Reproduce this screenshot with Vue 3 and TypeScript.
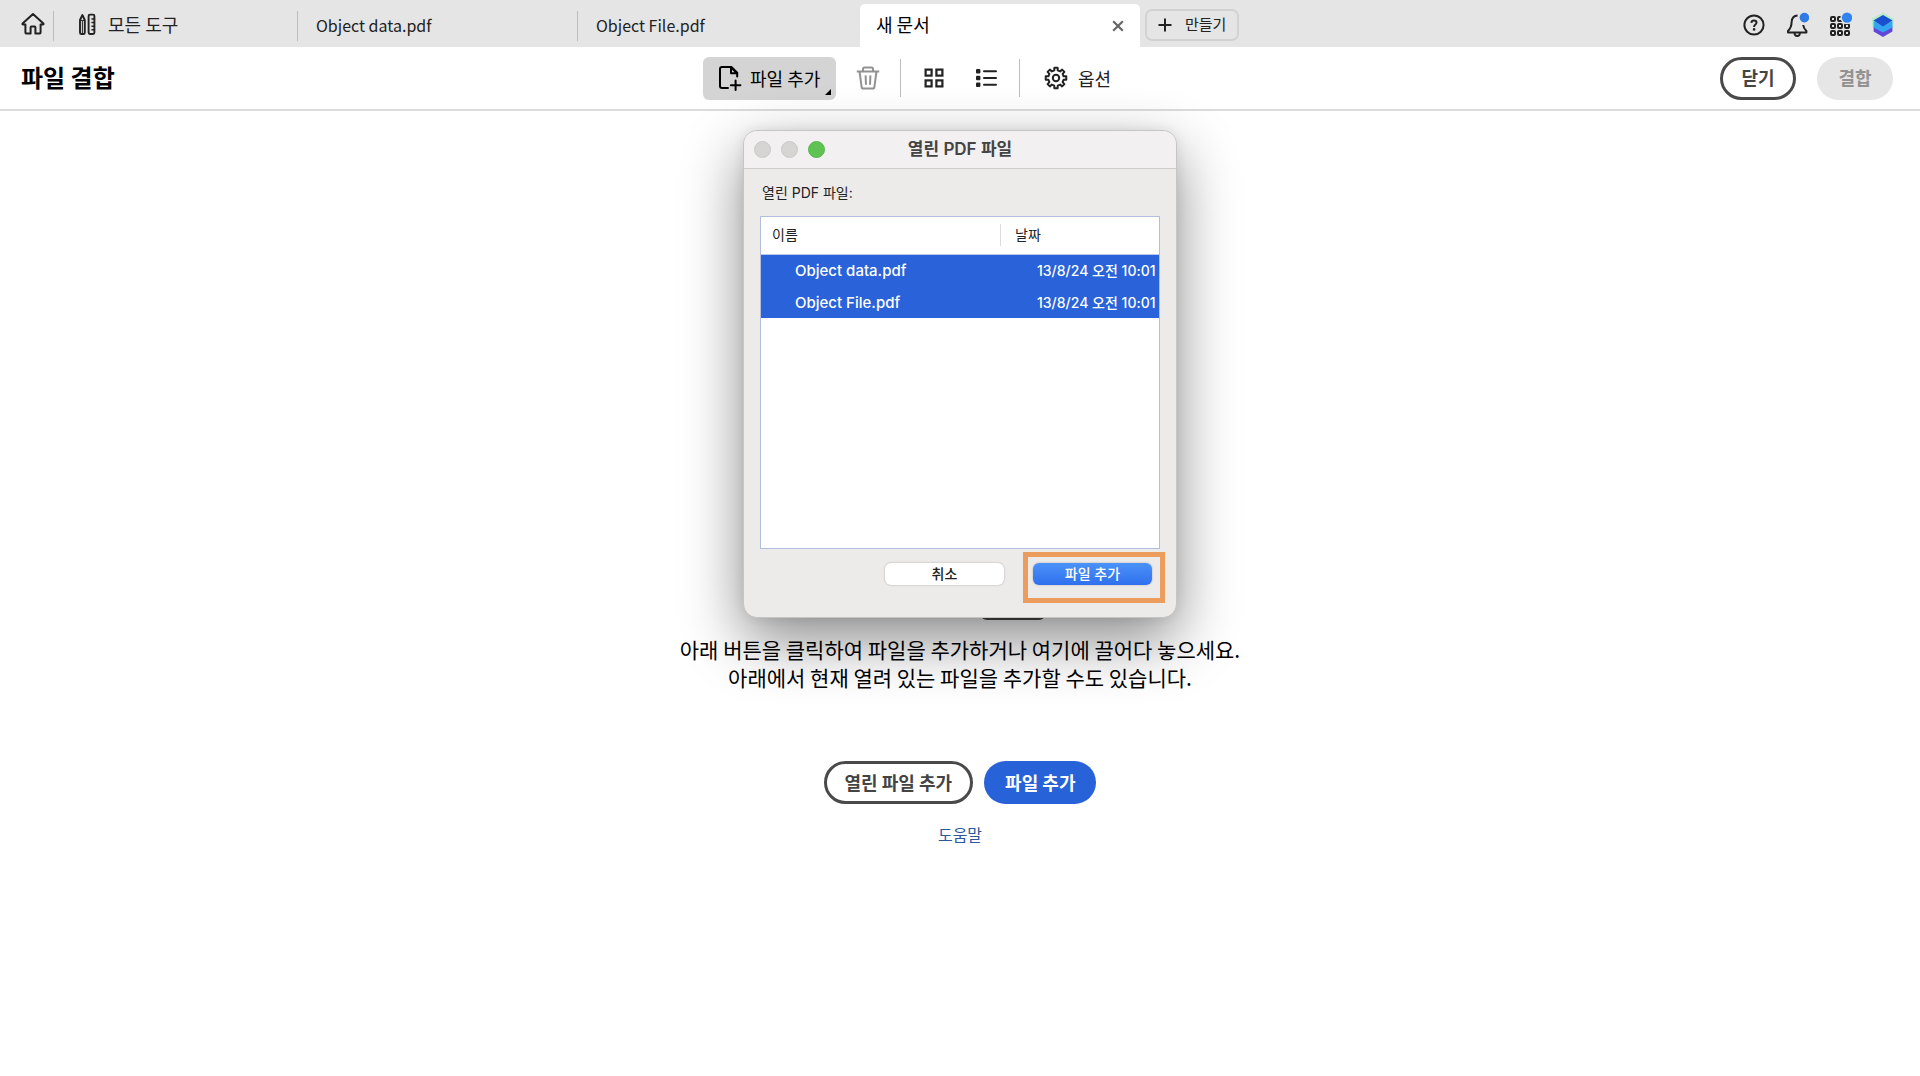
<script setup lang="ts">
import { ref } from 'vue'

interface Doc {
  name: string
  date: string
}

const fileTabs: string[] = ['Object data.pdf', 'Object File.pdf']
const openFiles = ref<Doc[]>([
  { name: 'Object data.pdf', date: '13/8/24 오전 10:01' },
  { name: 'Object File.pdf', date: '13/8/24 오전 10:01' },
])

const appDots: number[] = [0, 1, 2, 3, 4, 5, 6, 7, 8]

// Outline of an eight-toothed gear centred on (12, 12)
function gearPath(): string {
  const pts: string[] = []
  for (let i = 0; i < 8; i++) {
    const corners: [number, number][] = [
      [-13, 7.8],
      [-9, 10.4],
      [9, 10.4],
      [13, 7.8],
    ]
    for (const [offset, r] of corners) {
      const a = ((i * 45 + offset) * Math.PI) / 180
      pts.push(`${(12 + r * Math.sin(a)).toFixed(2)} ${(12 - r * Math.cos(a)).toFixed(2)}`)
    }
  }
  return `M${pts.join('L')}Z`
}
</script>

<template>
  <div class="app">
    <header class="tabs">
      <button class="home" aria-label="홈">
        <svg width="26" height="24" viewBox="0 0 26 24" fill="none" stroke="#222" stroke-width="2" stroke-linejoin="round" stroke-linecap="round">
          <path d="M13 2 L2.6 11.6 Q2 12.4 3 12.6 H5.4 V20 Q5.4 21.6 7 21.6 H10.6 V15.4 Q10.6 14.6 11.4 14.6 H14.6 Q15.4 14.6 15.4 15.4 V21.6 H19 Q20.6 21.6 20.6 20 V12.6 H23 Q24 12.4 23.4 11.6 Z" />
        </svg>
      </button>
      <button class="tools">
        <svg width="18" height="24" viewBox="0 0 18 24" fill="none" stroke="#222" stroke-width="2" stroke-linejoin="round">
          <path d="M2 8 L4.4 3 L6.8 8 V20.4 Q6.8 22 5.4 22 H3.4 Q2 22 2 20.4 Z" stroke-width="1.9" />
          <path d="M4.4 9 V21 M2 8.4 H6.8" stroke-width="1" />
          <rect x="10.6" y="2.6" width="5.8" height="19.4" rx="1.4" stroke-width="1.9" />
          <path d="M13.4 7 H16 M13.4 10.6 H16 M13.4 14.2 H16 M13.4 17.8 H16" stroke-width="1.5" />
        </svg>
        <span>모든 도구</span>
      </button>
      <button v-for="tab in fileTabs" :key="tab" class="tab">{{ tab }}</button>
      <div class="tab active">
        <span>새 문서</span>
        <button class="close" aria-label="탭 닫기">
          <svg width="12" height="12" viewBox="0 0 12 12" stroke="#666" stroke-width="2.2"><path d="M1.2 1.2 L10.8 10.8 M10.8 1.2 L1.2 10.8" /></svg>
        </button>
      </div>
      <button class="create">
        <svg width="14" height="14" viewBox="0 0 14 14" stroke="#222" stroke-width="2"><path d="M7 0.5 V13.5 M0.5 7 H13.5" /></svg>
        <span>만들기</span>
      </button>
      <nav class="status">
        <button aria-label="도움말">
          <svg width="24" height="26" viewBox="0 0 24 26" fill="none" stroke="#222" stroke-width="2">
            <circle cx="12" cy="13" r="9.6" />
            <path d="M9.4 10.8 Q9.6 8.6 12 8.6 Q14.5 8.6 14.5 10.6 Q14.5 11.8 13.2 12.7 Q12.1 13.5 12.1 15" />
            <circle cx="12.1" cy="17.4" r="1.3" fill="#222" stroke="none" />
          </svg>
        </button>
        <button aria-label="알림">
          <svg width="24" height="26" viewBox="0 0 24 26" fill="none" stroke="#222" stroke-width="2" stroke-linejoin="round">
            <path d="M12.6 3.4 Q7 3.6 6.6 10 Q6.6 15.4 3 19 V20.6 H21.4 V19 Q18.4 16 18.2 13" />
            <path d="M9.6 20.8 Q9.4 24 12.2 24 Q15 24 14.8 20.8" />
            <circle cx="19.4" cy="5.6" r="4.8" fill="#2f7be6" stroke="none" />
          </svg>
        </button>
        <button aria-label="앱">
          <svg width="24" height="26" viewBox="0 0 24 26" fill="none" stroke="#222" stroke-width="2">
            <rect v-for="i in appDots" :key="i" :x="3 + (i % 3) * 7" :y="5 + Math.floor(i / 3) * 7" width="4" height="4" rx="1" />
            <circle cx="19" cy="5.6" r="6.6" fill="#e5e5e5" stroke="none" />
            <circle cx="19" cy="5.6" r="5.2" fill="#2f84f2" stroke="none" />
          </svg>
        </button>
        <button aria-label="계정">
          <svg width="24" height="26" viewBox="0 0 24 26">
            <path d="M12 0.8 L23 6.6 V14 L12 20 L1 14 V6.6 Z" fill="#86f7a8" opacity=".5" />
            <path d="M2.6 14.4 L12 19 L21.4 14.4 V19.6 L12 25 L2.6 19.6 Z" fill="#6246d6" />
            <path d="M2.6 9 L12 14 L21.4 9 V15.6 L12 20.4 L2.6 15.6 Z" fill="#35a4f0" />
            <path d="M12 3 L21.6 8.6 L12 14.4 L2.4 8.6 Z" fill="#1a4fce" />
          </svg>
        </button>
      </nav>
    </header>

    <section class="toolbar">
      <h1>파일 결합</h1>
      <div class="actions">
        <button class="add">
          <svg width="24" height="26" viewBox="0 0 24 26" fill="none" stroke="#000" stroke-width="2" stroke-linecap="round" stroke-linejoin="round">
            <path d="M10 23 H4 Q2 23 2 21 V4 Q2 2 4 2 H13.4 L19.2 7.8 V11.4" />
            <path d="M13 2.4 V8.2 H19 Z" fill="#d4d4d4" />
            <path d="M17.6 15.4 V25 M12.8 20.2 H22.4" />
          </svg>
          <span>파일 추가</span>
          <svg class="corner" width="6" height="6" viewBox="0 0 6 6"><path d="M6 0 V6 H0 Z" /></svg>
        </button>
        <button class="icon trash" aria-label="삭제" disabled>
          <svg width="24" height="24" viewBox="0 0 24 24" fill="none" stroke="#929292" stroke-width="2" stroke-linejoin="round">
            <path d="M0.8 5.6 H23.2 M7 5.4 V3 Q7 1.6 8.4 1.6 H15.6 Q17 1.6 17 3 V5.4 M3.6 6 L5.6 20.8 Q5.8 22.6 7.4 22.6 H16.6 Q18.2 22.6 18.4 20.8 L20.4 6 M9.6 9.4 L10 18.8 M14.4 9.4 L14 18.8" />
          </svg>
        </button>
        <i class="rule"></i>
        <button class="icon grid" aria-label="축소판 보기">
          <svg width="20" height="20" viewBox="0 0 20 20" fill="none" stroke="#222" stroke-width="2.2">
            <rect x="1.6" y="1.6" width="6" height="6" /><rect x="12.4" y="1.6" width="6" height="6" />
            <rect x="1.6" y="12.4" width="6" height="6" /><rect x="12.4" y="12.4" width="6" height="6" />
          </svg>
        </button>
        <button class="icon list" aria-label="목록 보기">
          <svg width="21" height="20" viewBox="0 0 21 20" fill="#222">
            <rect x="0" y="1" width="4.4" height="4.4" rx="1" /><rect x="0" y="7.8" width="4.4" height="4.4" rx="1" /><rect x="0" y="14.6" width="4.4" height="4.4" rx="1" />
            <rect x="7" y="2.2" width="14" height="2" rx="1" /><rect x="7" y="9" width="14" height="2" rx="1" /><rect x="7" y="15.8" width="14" height="2" rx="1" />
          </svg>
        </button>
        <i class="rule"></i>
        <button class="options">
          <svg width="24" height="24" viewBox="0 0 24 24" fill="none" stroke="#222" stroke-width="2" stroke-linejoin="round">
            <path :d="gearPath()" /><circle cx="12" cy="12" r="3.2" />
          </svg>
          <span>옵션</span>
        </button>
      </div>
      <div class="finish">
        <button class="pill outline">닫기</button>
        <button class="pill off" disabled>결합</button>
      </div>
    </section>

    <main>
      <svg class="art" width="170" height="64" viewBox="0 0 170 64">
        <rect x="106" y="0" width="64" height="64" rx="6" fill="#4b4b4b" />
      </svg>
      <p>아래 버튼을 클릭하여 파일을 추가하거나 여기에 끌어다 놓으세요.<br />아래에서 현재 열려 있는 파일을 추가할 수도 있습니다.</p>
      <div class="choices">
        <button class="pill outline">열린 파일 추가</button>
        <button class="pill primary">파일 추가</button>
      </div>
      <a href="#">도움말</a>

      <section class="dialog" role="dialog" aria-labelledby="dialog-title">
        <header>
          <div class="lights"><i></i><i></i><i class="zoom"></i></div>
          <h2 id="dialog-title">열린 PDF 파일</h2>
        </header>
        <div class="body">
          <h3 id="list-title">열린 PDF 파일:</h3>
          <div class="listbox">
            <table aria-labelledby="list-title">
              <thead>
                <tr><th>이름</th><th><span>날짜</span></th></tr>
              </thead>
              <tbody>
                <tr v-for="file in openFiles" :key="file.name">
                  <td>{{ file.name }}</td>
                  <td>{{ file.date }}</td>
                </tr>
              </tbody>
            </table>
          </div>
          <footer>
            <button class="mac">취소</button>
            <div class="highlight"><button class="mac default">파일 추가</button></div>
          </footer>
        </div>
      </section>
    </main>
  </div>
</template>

<style>
body {
  background: #fff;
}
</style>

<style scoped>
.app {
  min-height: 100vh;
  font-family: 'Noto Sans CJK KR', sans-serif;
  font-size: 18px;
  line-height: 24px;
  color: #222;
}
* {
  box-sizing: border-box;
}
button {
  font: inherit;
  color: inherit;
  background: none;
  border: 0;
  padding: 0;
  margin: 0;
  white-space: nowrap;
}
svg {
  display: block;
  flex: none;
}
.tabs {
  display: flex;
  height: 47px;
  background: #e5e5e5;
}
.home,
.tools,
.tab {
  position: relative;
  flex: none;
  display: flex;
  align-items: center;
}
.home {
  width: 54px;
  padding-left: 20px;
}
.tools {
  width: 244px;
  padding-left: 24px;
  gap: 12px;
}
.tab {
  width: 280px;
  padding: 2px 16px 0 18px;
  font-size: 16px;
}
.home::after,
.tools::after,
.tab:nth-child(3)::after {
  content: '';
  position: absolute;
  right: 0;
  top: 11px;
  width: 1px;
  height: 30px;
  background: #bdbdbd;
}
.tab.active {
  margin: 4px 0 0 2px;
  padding: 0 16px;
  justify-content: space-between;
  background: #fff;
  border-radius: 5px 5px 0 0;
  font-size: 18px;
  color: #000;
}
.tab.active span {
  padding-bottom: 4px;
}
.create {
  flex: none;
  align-self: center;
  display: flex;
  align-items: center;
  gap: 13px;
  width: 94px;
  height: 32px;
  margin: 3px 0 0 5px;
  padding-left: 11px;
  border: 2px solid #d2d2d2;
  border-radius: 7px;
  font-size: 15px;
}
.create span {
  padding-bottom: 3px;
}
.status {
  display: flex;
  align-items: center;
  gap: 19px;
  margin-left: auto;
  padding: 3px 25px 0 0;
}
.toolbar {
  display: grid;
  grid-template-columns: 1fr auto 1fr;
  align-items: center;
  height: 64px;
  border-bottom: 2px solid #dcdcdc;
}
h1 {
  margin: 0;
  padding: 0 0 2px 21px;
  font-size: 24px;
  line-height: 32px;
  color: #000;
}
.actions {
  display: flex;
  align-items: center;
  width: 514px;
}
.add {
  position: relative;
  display: flex;
  align-items: center;
  gap: 8px;
  width: 133px;
  height: 43px;
  padding-left: 15px;
  background: #d4d4d4;
  border-radius: 6px;
  color: #000;
}
.corner {
  position: absolute;
  right: 5px;
  bottom: 5px;
}
.trash {
  margin: 0 20px;
}
.rule {
  width: 1px;
  height: 38px;
  background: #bdbdbd;
}
.grid {
  margin: 0 32px 0 23px;
}
.list {
  margin-right: 22px;
}
.options {
  display: flex;
  align-items: center;
  gap: 10px;
  margin-left: 24px;
}
.finish {
  display: flex;
  justify-content: flex-end;
  gap: 21px;
  padding-right: 27px;
}
.pill {
  height: 43px;
  padding: 0 21px 2px;
  border-radius: 22px;
  font-weight: 700;
}
.outline {
  background: #fff;
  border: 3px solid #4a4a4a;
  padding: 0 18px 2px;
  color: #444;
}
.finish .pill {
  width: 76px;
}
.off {
  background: #e6e6e6;
  color: #929292;
}
.primary {
  background: #2862d8;
  color: #fff;
}
main {
  position: relative;
  display: flex;
  flex-direction: column;
  align-items: center;
  padding-top: 445px;
}
p {
  margin: 15px 0 70px;
  font-size: 21px;
  line-height: 28px;
  text-align: center;
  color: #000;
}
.choices {
  display: flex;
  gap: 11px;
  margin-bottom: 18px;
}
a {
  font-size: 16px;
  color: #2b579c;
  text-decoration: none;
}
.dialog {
  position: absolute;
  top: 19px;
  left: 50%;
  width: 434px;
  transform: translateX(-50%);
  background: #edebe9;
  border: 1px solid #c6c5c4;
  border-radius: 14px;
  box-shadow: 0 22px 60px rgba(0, 0, 0, 0.46), 0 0 12px rgba(0, 0, 0, 0.08);
  font-family: Inter, 'Noto Sans CJK KR', sans-serif;
  font-size: 14px;
}
.dialog header {
  position: relative;
  height: 38px;
  background: #f2f0f0;
  border-bottom: 1px solid #cdcccb;
  border-radius: 13px 13px 0 0;
}
.lights {
  position: absolute;
  top: 10px;
  left: 10px;
  display: flex;
  gap: 10px;
}
.lights i {
  width: 17px;
  height: 17px;
  border: 1px solid #cac9c8;
  border-radius: 50%;
  background: #d6d5d4;
}
.lights .zoom {
  background: #5ec353;
  border-color: #58b94e;
}
h2 {
  margin: 0;
  font-size: 17px;
  font-weight: 600;
  line-height: 36px;
  text-align: center;
  color: #444;
}
.body {
  padding: 12px 16px 14px;
}
h3 {
  margin: 0 0 11px 2px;
  font-size: 14px;
  font-weight: 400;
  line-height: 24px;
}
.listbox {
  height: 333px;
  background: #fff;
  border: 1px solid #b3bedf;
  overflow: hidden;
}
table {
  width: 100%;
  border-collapse: collapse;
  table-layout: fixed;
  white-space: nowrap;
}
th {
  height: 37px;
  padding: 0 0 0 11px;
  border-bottom: 1px solid #b9c8ec;
  font-weight: 400;
  text-align: left;
}
th:first-child {
  width: 239px;
}
th:last-child {
  padding: 0;
}
th span {
  display: block;
  padding-left: 14px;
  border-left: 1px solid #dcdcdc;
  line-height: 22px;
}
td {
  height: 32px;
  padding: 2px 0 0 34px;
  background: #2962d9;
  color: #fff;
  font-size: 15px;
  font-weight: 500;
}
td:last-child {
  padding-left: 37px;
  font-size: 14px;
}
footer {
  display: flex;
  justify-content: flex-end;
  align-items: flex-start;
  gap: 19px;
  margin: 3px -5px 0 0;
}
.mac {
  display: block;
  width: 119px;
  height: 22px;
  background: #fff;
  border-radius: 6px;
  box-shadow: 0 0 2px rgba(0, 0, 0, 0.3);
  font-weight: 500;
  line-height: 20px;
}
footer > .mac {
  margin-top: 11px;
}
.highlight {
  height: 51px;
  padding: 6px 8px 0 5px;
  border: 5px solid #ec9c5c;
}
.default {
  background: linear-gradient(#4b92f8, #2f70ee);
  color: #fff;
}
</style>
